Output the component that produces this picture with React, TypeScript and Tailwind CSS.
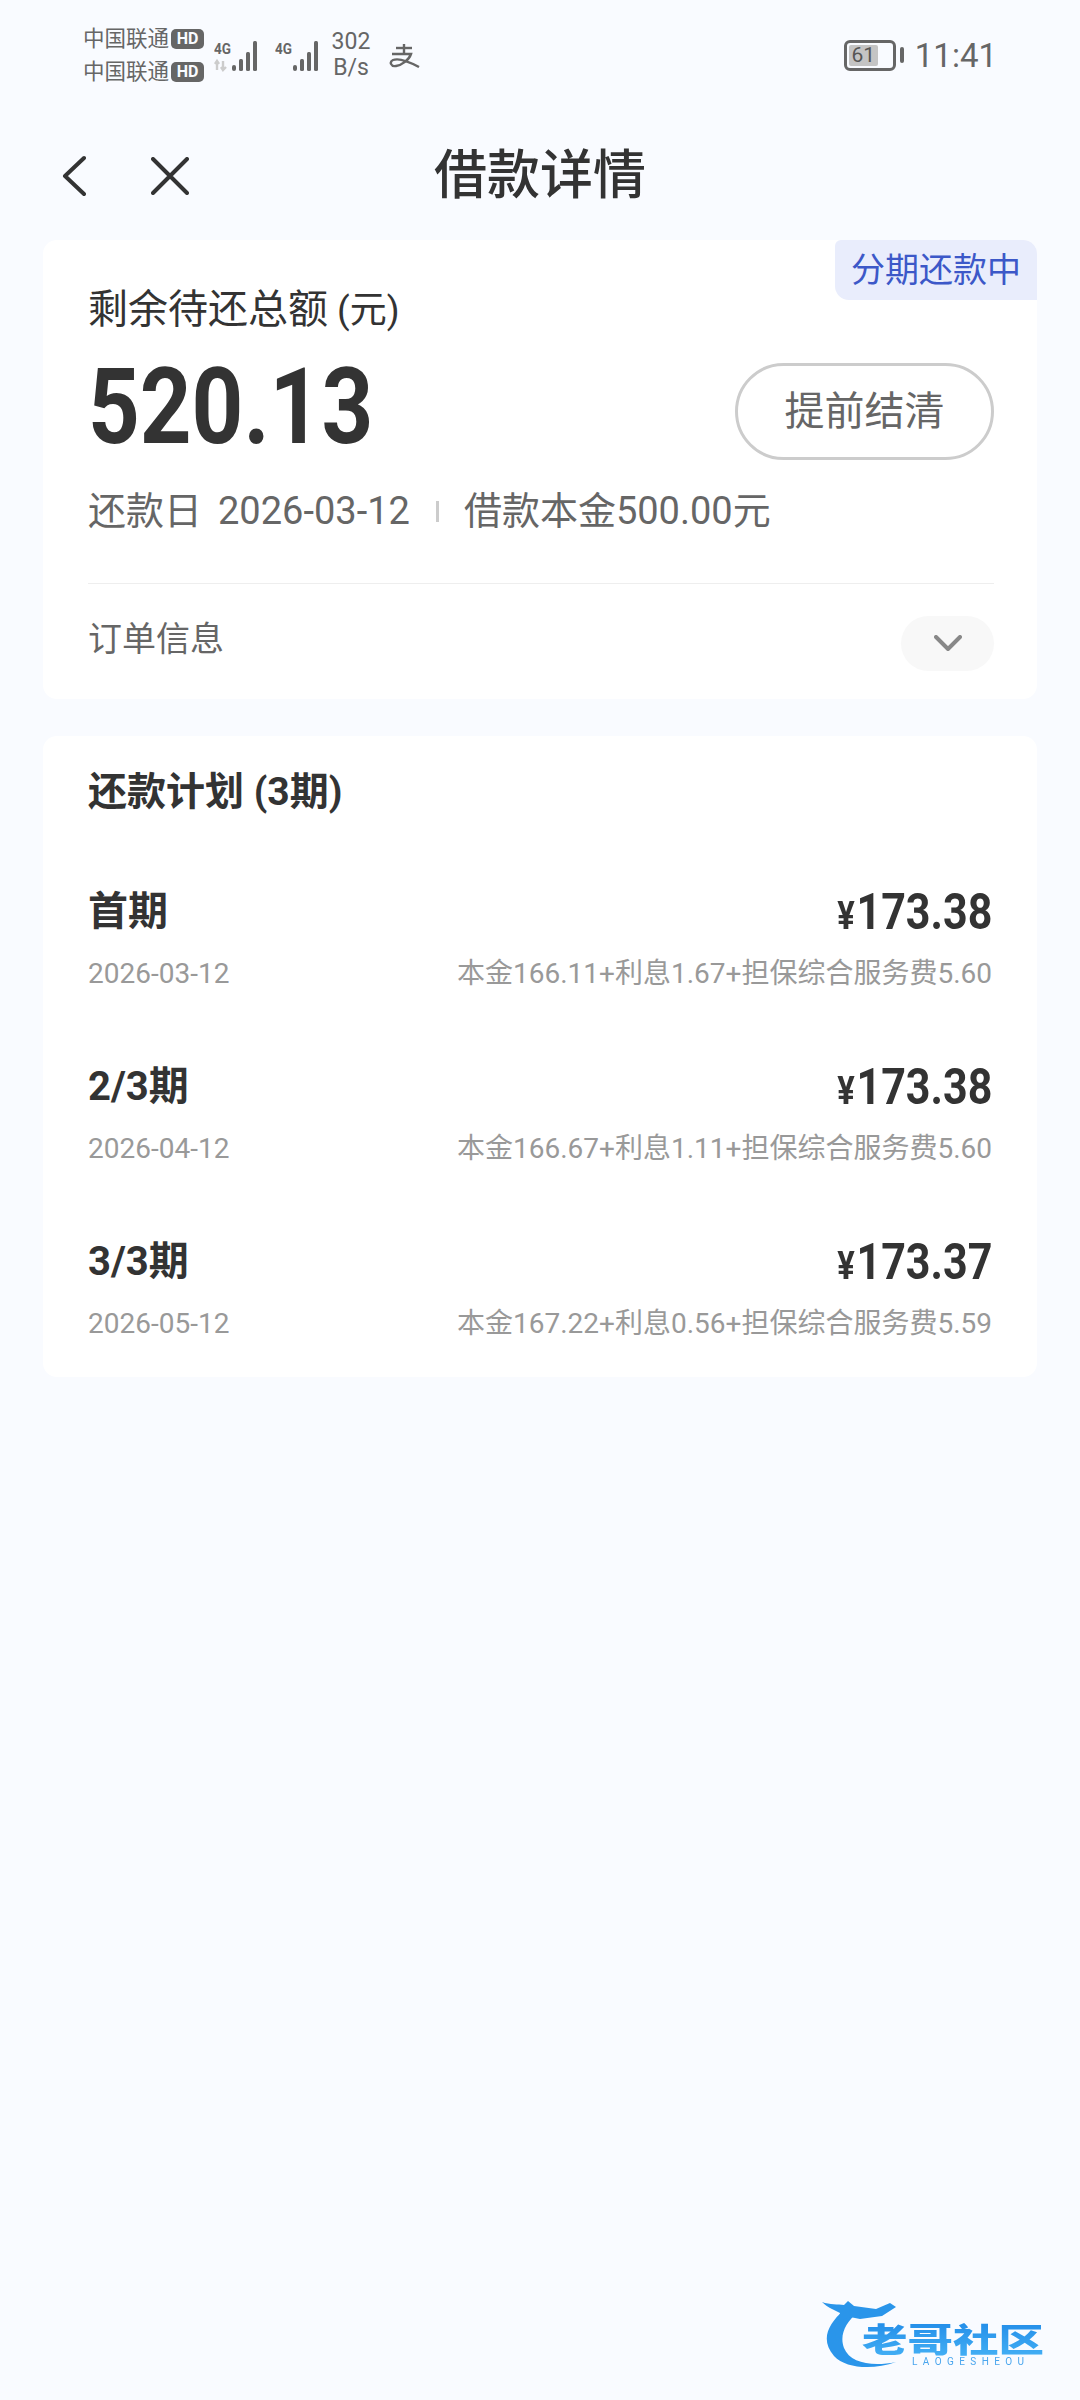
import React from "react";

const plans = [
  { name: "首期", amount: "173.38", date: "2026-03-12", detail: "本金166.11+利息1.67+担保综合服务费5.60" },
  { name: "2/3期", amount: "173.38", date: "2026-04-12", detail: "本金166.67+利息1.11+担保综合服务费5.60" },
  { name: "3/3期", amount: "173.37", date: "2026-05-12", detail: "本金167.22+利息0.56+担保综合服务费5.59" },
];

function Carrier() {
  return (
    <div className="flex h-[33px] items-center">
      <span className="w-[87px] text-[21.5px] leading-none text-[#666]">中国联通</span>
      <span className="ml-[1px] flex h-[20px] w-[33px] items-center justify-center rounded-[5px] bg-[#666] text-[16px] font-bold leading-none text-[#f9fbff]">
        HD
      </span>
    </div>
  );
}

function Signal({ withArrows }: { withArrows?: boolean }) {
  return (
    <svg width="50" height="32" viewBox="0 0 50 32" className="shrink-0">
      <text x="0" y="14" fontSize="15" fontWeight="700" fill="#666" fontFamily="Roboto" textLength="17" lengthAdjust="spacingAndGlyphs">
        4G
      </text>
      {withArrows && (
        <g stroke="#ccc" strokeWidth="2.4" fill="none">
          <path d="M3 30V22M1 24l2-3 2 3" />
          <path d="M9 21v9M7 27l2 3 3-3" />
        </g>
      )}
      <g fill="#666">
        <rect x="18" y="25" width="4" height="6" rx="2" />
        <rect x="25" y="19" width="4" height="12" rx="1.5" />
        <rect x="32" y="12" width="4" height="19" rx="1.5" />
        <rect x="39" y="1" width="4" height="30" rx="1.5" />
      </g>
    </svg>
  );
}

function StatusBar() {
  return (
    <div className="flex h-[110px] items-center justify-between pl-[83px] pr-[83px] text-[#666]">
      <div className="flex items-center">
        <div className="flex flex-col">
          <Carrier />
          <Carrier />
        </div>
        <div className="ml-[10px] flex gap-[11px] pt-[1px]">
          <Signal withArrows />
          <Signal />
        </div>
        <div className="ml-[7px] flex w-[38px] flex-col items-center text-[23px] leading-[26px]">
          <span>302</span>
          <span>B/s</span>
        </div>
        <svg width="32" height="24" viewBox="0 0 32 24" className="ml-[18px] mt-[1px]" fill="none" stroke="#666" strokeWidth="2.4">
          <path d="M8 4h16" />
          <path d="M16 0v9" />
          <path d="M4 10h19c-2 6-9 11-15 12-5 1-7-4-3-6 5-2 13 0 26 7" />
        </svg>
      </div>
      <div className="flex items-center">
        <div className="flex h-[31px] w-[52px] items-center rounded-[6px] border-[3px] border-[#666] p-[2px]">
          <div className="flex h-full w-[29px] items-center justify-center rounded-[2px] bg-[#c4c4c4] text-[21px] leading-none text-[#555]">
            61
          </div>
        </div>
        <div className="ml-[4px] h-[16px] w-[4px] rounded-full bg-[#666]" />
        <span className="ml-[11px] text-[33px] leading-none">11:41</span>
      </div>
    </div>
  );
}

function NavBar() {
  return (
    <div className="grid h-[130px] grid-cols-[1fr_auto_1fr] items-center pt-[2px]">
      <div className="flex items-center pl-[62px]">
        <svg width="24" height="42" viewBox="0 0 24 42" fill="none" stroke="#333" strokeWidth="4" strokeLinecap="round" strokeLinejoin="round">
          <path d="M22 3 3 21l19 18" />
        </svg>
        <svg width="38" height="38" viewBox="0 0 38 38" className="ml-[65px]" fill="none" stroke="#333" strokeWidth="4" strokeLinecap="round">
          <path d="M2 2l34 34M36 2 2 36" />
        </svg>
      </div>
      <h1 className="text-[53px] font-medium leading-none text-[#333]">借款详情</h1>
      <div />
    </div>
  );
}

function SummaryCard() {
  return (
    <div className="relative mx-[43px] rounded-[14px] bg-white pl-[45px] pr-[43px] pt-[42px]">
      <div className="absolute right-0 top-0 flex h-[60px] w-[202px] items-center justify-center rounded-bl-[14px] rounded-tl-[6px] rounded-tr-[14px] bg-[#e9edfc] text-[34px] leading-none text-[#3c58c8]">
        分期还款中
      </div>
      <div className="text-[40px] leading-[56px] text-[#333]">
        <span>剩余待还总额</span>
        <span className="ml-[9px] text-[37px]">(元)</span>
      </div>
      <div className="mt-[24px] flex h-[97px] items-center justify-between">
        <span className="mb-[8px] origin-left scale-x-[0.86] text-[105px] font-bold leading-none text-[#333]">520.13</span>
        <button className="flex h-[97px] w-[259px] items-center justify-center rounded-full border-[3px] border-[#ccc] text-[40px] leading-none text-[#666]">
          提前结清
        </button>
      </div>
      <div className="mt-[26px] flex h-[50px] items-center text-[38px] leading-[50px] text-[#666]">
        <span>还款日</span>
        <span className="ml-[16px]">2026-03-12</span>
        <span className="ml-[26px] h-[21px] w-[3px] bg-[#ccc]" />
        <span className="ml-[25px]">借款本金500.00元</span>
      </div>
      <div className="mt-[47px] h-[1px] bg-[#eee]" />
      <div className="flex h-[115px] items-start justify-between pt-[32px]">
        <span className="text-[34px] leading-[46px] text-[#666]">订单信息</span>
        <span className="flex h-[55px] w-[93px] items-center justify-center rounded-full bg-[#f8f8f8]">
          <svg width="28" height="17" viewBox="0 0 28 17" fill="none" stroke="#888" strokeWidth="4" strokeLinecap="round" strokeLinejoin="round">
            <path d="M2 2l12 12L26 2" />
          </svg>
        </span>
      </div>
    </div>
  );
}

function PlanCard() {
  return (
    <div className="mx-[43px] mt-[37px] rounded-[14px] bg-white pb-[33px] pl-[45px] pr-[45px] pt-[31px]">
      <div className="text-[39px] font-bold leading-[50px] text-[#333]">还款计划 (3期)</div>
      <div className="mt-[70px] flex flex-col gap-[68px]">
        {plans.map((p) => (
          <div key={p.date}>
            <div className="flex h-[50px] items-center justify-between text-[#333]">
              <span className="text-[40px] font-bold leading-none">{p.name}</span>
              <span className="origin-right scale-x-[0.86] whitespace-nowrap text-[50px] font-bold leading-none">
                <span className="mr-[2px] text-[38px]">¥</span>
                {p.amount}
              </span>
            </div>
            <div className="mt-[17px] flex h-[40px] items-center justify-between text-[#999]">
              <span className="text-[28px] leading-none">{p.date}</span>
              <span className="whitespace-nowrap text-[28px] leading-none">{p.detail}</span>
            </div>
          </div>
        ))}
      </div>
    </div>
  );
}

function Watermark() {
  return (
    <svg width="240" height="80" viewBox="0 0 240 80" className="absolute right-[18px] top-[2296px] blur-[0.5px]">
      <defs>
        <linearGradient id="wm" x1="0" y1="0" x2="0" y2="1">
          <stop offset="0" stopColor="#1c86e6" />
          <stop offset="1" stopColor="#48b4f6" />
        </linearGradient>
      </defs>
      <path d="M22 14C6 28-2 44 12 60c12 13 40 14 62 6-24 5-46 1-52-14-5-13 2-26 14-36z" fill="#2a95ea" />
      <path d="M0 6c8 3 16 2 22 3l4-4 6 5 22 3 14-6 6 4-14 9-22 3-10-2-12 4 2-8-10-5C6 11 3 9 0 6z" fill="#2a95ea" />
      <text fontFamily="'Noto Sans CJK SC', sans-serif" fontWeight="900" fontSize="46" fill="url(#wm)" transform="translate(40 56) scale(1 0.72)" textLength="182" lengthAdjust="spacingAndGlyphs">
        老哥社区
      </text>
      <text x="90" y="69" fontFamily="Roboto, sans-serif" fontSize="10" fill="#4aa6ee" textLength="112" lengthAdjust="spacing">
        LAOGESHEOU
      </text>
    </svg>
  );
}

export default function App() {
  return (
    <div className="relative min-h-[2400px] overflow-hidden bg-[#f9fbff] font-['Roboto','Noto_Sans_CJK_SC',sans-serif]">
      <StatusBar />
      <NavBar />
      <SummaryCard />
      <PlanCard />
      <Watermark />
    </div>
  );
}
